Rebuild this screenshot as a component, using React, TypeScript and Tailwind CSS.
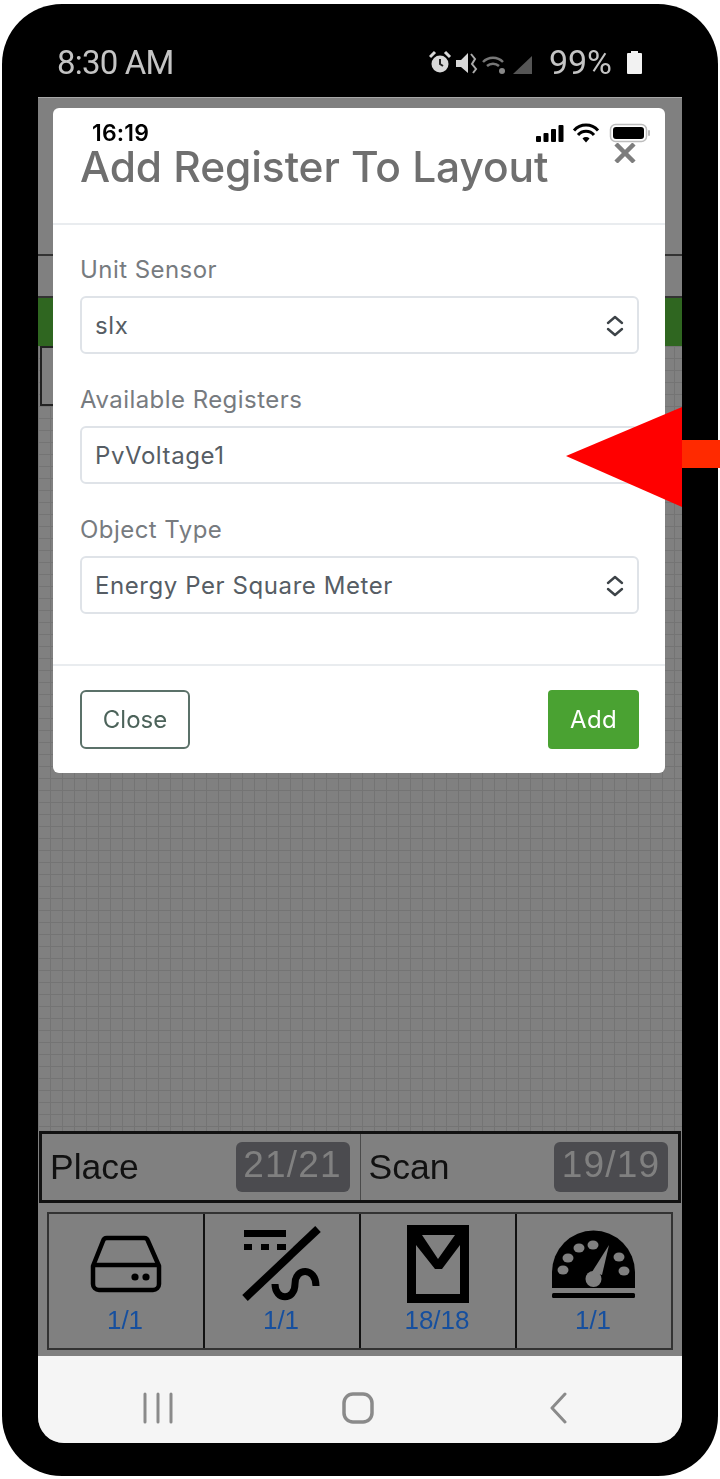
const sans = { fontFamily: "Inter, sans-serif" };

function Field({ label, value, chevrons }: { label: string; value: string; chevrons?: boolean }) {
  return (
    <div className="mb-[28px]">
      <div className="h-[36px] mb-[8px] flex items-center text-[24px] text-[#777b7f] tracking-[0.45px]">{label}</div>
      <div className="h-[58px] rounded-[6px] border-2 border-[#dfe3e8] pl-[13px] pr-[12px] pt-[2px] flex items-center justify-between text-[24px] text-[#565d64] tracking-[0.58px]">
        <span>{value}</span>
        {chevrons && (
          <svg width="20" height="26" viewBox="0 0 20 26" fill="none" stroke="#3d4348" strokeWidth="2.4" strokeLinecap="round" strokeLinejoin="round">
            <path d="M3 10l7-6 7 6M3 16l7 6 7-6" />
          </svg>
        )}
      </div>
    </div>
  );
}

function AndroidStatus() {
  return (
    <div className="h-[93px] shrink-0 flex items-center justify-between pl-[19px] pr-[40px] pt-[24px] blur-[0.5px]" style={{ fontFamily: "Roboto, sans-serif" }}>
      <span className="text-[33px] text-[#c4c4c4] tracking-[-0.8px]">8:30 AM</span>
      <div className="flex items-center">
        <svg width="106" height="26" viewBox="0 0 106 26" className="mr-[14px]">
          <circle cx="11" cy="14" r="8.5" fill="#d8d8d8" />
          <path d="M11 9v5l3 2" stroke="#222" strokeWidth="2" fill="none" />
          <path d="M1 7l5-5M21 7l-5-5" stroke="#d8d8d8" strokeWidth="3" />
          <path d="M27 10h5l7-7v20l-7-6h-5z" fill="#d8d8d8" />
          <path d="M42 4l4 5-3 5 4 5-3 4" stroke="#aaa" strokeWidth="2" fill="none" />
          <path d="M54 12a14 14 0 0 1 20 0M58 16a9 9 0 0 1 12 0" stroke="#777" strokeWidth="2.5" fill="none" />
          <circle cx="73" cy="21" r="3" fill="#888" />
          <path d="M84 24L103 6v18z" fill="#555" />
        </svg>
        <span className="text-[34px] text-[#c4c4c4] mr-[15px]">99%</span>
        <svg width="15" height="23" viewBox="0 0 15 23">
          <path d="M4 0h7v2h3a1 1 0 0 1 1 1v19a1 1 0 0 1-1 1H1a1 1 0 0 1-1-1V3a1 1 0 0 1 1-1h3z" fill="#f2f2f2" />
        </svg>
      </div>
    </div>
  );
}

function IosStatus() {
  return (
    <div className="h-[24px] flex items-center justify-between pl-[39px] pr-[14px] text-black">
      <span className="text-[23px] font-semibold tracking-[0.2px] leading-none" style={sans}>16:19</span>
      <svg width="115" height="20" viewBox="0 0 115 20">
        <rect x="0" y="13" width="5" height="6" rx="1" />
        <rect x="7.5" y="10" width="5" height="9" rx="1" />
        <rect x="15" y="6" width="5" height="13" rx="1" />
        <rect x="22.5" y="2" width="5" height="17" rx="1" />
        <path d="M38 7.5a16 16 0 0 1 24 0M42 12a10.5 10.5 0 0 1 16 0" fill="none" stroke="#000" strokeWidth="3" />
        <path d="M46.5 15.5a5 5 0 0 1 7 0L50 19.5z" />
        <rect x="74.5" y="1.5" width="36" height="17" rx="5" fill="none" stroke="#bdbdbd" strokeWidth="1.5" />
        <rect x="77" y="4" width="31" height="12" rx="3" />
        <rect x="112" y="7" width="2" height="6" rx="1" fill="#bdbdbd" />
      </svg>
    </div>
  );
}

function DriveIcon() {
  return (
    <svg width="72" height="58" viewBox="0 0 72 58" fill="none" stroke="#000" strokeWidth="4.5" strokeLinejoin="round">
      <path d="M17 3h37a4 4 0 0 1 4 3l11 25v18a6 6 0 0 1-6 6H9a6 6 0 0 1-6-6V31L13 6a4 4 0 0 1 4-3z" />
      <path d="M3 30h66" />
      <circle cx="45" cy="42" r="3.6" fill="#000" stroke="none" />
      <circle cx="56" cy="42" r="3.6" fill="#000" stroke="none" />
    </svg>
  );
}

function SlashIcon() {
  return (
    <svg width="80" height="76" viewBox="243 1225 80 76">
      <path d="M245 1229h42v7h-42zM245 1243h8v6h-8zM262 1243h8v6h-8zM278 1243h9v6h-9z" />
      <path d="M319 1228L246 1297" stroke="#000" strokeWidth="8" />
      <path d="M276 1283C276 1300 296 1300 296 1283C296 1266 317 1266 317 1285" stroke="#000" strokeWidth="7" fill="none" />
    </svg>
  );
}

function ValveIcon() {
  return (
    <svg width="62" height="78" viewBox="407 1223 62 78">
      <path fillRule="evenodd" d="M407 1223h62v78h-62zM422 1233L438 1257L455 1233zM416 1243V1292H460V1243L442 1267H435z" />
    </svg>
  );
}

function GaugeIcon() {
  return (
    <svg width="84" height="70" viewBox="553 1227 84 70">
      <path d="M553 1286V1270A41.5 41.5 0 0 1 636 1270V1286z" />
      <rect x="553" y="1291" width="83" height="5" rx="1.5" />
      <g fill="#808080">
        <ellipse cx="564" cy="1268" rx="5.5" ry="4.5" />
        <ellipse cx="569" cy="1256" rx="5.5" ry="4.5" />
        <ellipse cx="580" cy="1246" rx="5.5" ry="4.5" />
        <ellipse cx="594" cy="1243" rx="5.5" ry="4.5" />
        <ellipse cx="620" cy="1255" rx="5.5" ry="4.5" />
        <ellipse cx="625" cy="1269" rx="5.5" ry="4.5" />
        <path d="M610 1243L603 1273L593 1270z" />
        <circle cx="594.5" cy="1277" r="8" />
      </g>
    </svg>
  );
}

function Tile({ icon, count, border }: { icon: React.ReactNode; count: string; border?: boolean }) {
  return (
    <div className={`flex-1 flex flex-col items-center pt-[4px] ${border ? "border-r-2 border-[#111]" : ""}`}>
      <div className="h-[92px] flex items-center justify-center">{icon}</div>
      <span className="text-[26px] leading-none text-[#164f9e] -ml-[2px] -mt-[3px]" style={{ fontFamily: "Liberation Sans, sans-serif" }}>{count}</span>
    </div>
  );
}

function Count({ label, value, right }: { label: string; value: string; right?: boolean }) {
  return (
    <div className={`flex-1 flex items-center justify-between pl-[8px] pr-[10px] ${right ? "" : "border-r border-[#4a4a4a]"}`}>
      <span className="text-[35.5px] text-[#111] mt-[2px]">{label}</span>
      <span className="w-[114px] h-[50px] rounded-[6px] bg-[#4b4b4f] text-[#808080] text-[37px] flex items-center justify-center tracking-[1.2px] pb-[5px]">{value}</span>
    </div>
  );
}

export default function App() {
  return (
    <div className="relative w-[720px] h-[1479px] bg-white pt-[4px] pb-[3px] px-[2px]">
      <div className="h-full bg-black rounded-[60px] flex flex-col px-[36px] pb-[33px]">
        <AndroidStatus />

        <div className="relative flex-1 flex flex-col rounded-b-[26px] overflow-hidden bg-[#808080] border-t border-[#a8a8a8] blur-[0.35px]" style={{ fontFamily: "Liberation Sans, sans-serif" }}>
          {/* page behind the dialog */}
          <div className="h-[158px] shrink-0 border-b-2 border-[#333]" />
          <div className="h-[42px] shrink-0 border-b-2 border-[#333]" />
          <div className="h-[48px] shrink-0 bg-[#2f6620]" />
          <div className="flex-1 bg-[#808080] bg-[linear-gradient(#747474_1px,transparent_1px),linear-gradient(90deg,#747474_1px,transparent_1px)] bg-[size:12px_12px]">
            <div className="h-[60px] w-[40px] ml-[2px] border-2 border-[#222] bg-[#808080]" />
          </div>

          <div className="h-[72px] shrink-0 mx-[1px] flex border-[3px] border-[#111]">
            <Count label="Place" value="21/21" />
            <Count label="Scan" value="19/19" right />
          </div>

          <div className="h-[9px] shrink-0" />
          <div className="h-[138px] shrink-0 mx-[9px] flex border-2 border-[#333] text-center">
            <Tile icon={<DriveIcon />} count="1/1" border />
            <Tile icon={<SlashIcon />} count="1/1" border />
            <Tile icon={<ValveIcon />} count="18/18" border />
            <Tile icon={<GaugeIcon />} count="1/1" />
          </div>
          <div className="h-[6px] shrink-0" />

          <div className="h-[87px] shrink-0 bg-[#f5f5f5] flex items-center justify-between pl-[105px] pr-[115px] pt-[16px]">
            <svg width="30" height="32" viewBox="0 0 30 32" stroke="#8a8a8a" strokeWidth="3" strokeLinecap="round">
              <path d="M2 2v28M15 2v28M28 2v28" />
            </svg>
            <svg className="mr-[6px]" width="32" height="32" viewBox="0 0 32 32" fill="none" stroke="#8a8a8a" strokeWidth="3.5">
              <rect x="2" y="2" width="28" height="28" rx="9" />
            </svg>
            <svg width="18" height="32" viewBox="0 0 18 32" fill="none" stroke="#8a8a8a" strokeWidth="3" strokeLinecap="round" strokeLinejoin="round">
              <path d="M16 2L3 16l13 14" />
            </svg>
          </div>

          {/* dialog */}
          <div className="absolute left-[15px] top-[10px] w-[612px] h-[665px] bg-white rounded-[6px] flex flex-col" style={sans}>
            <div className="relative h-[117px] shrink-0 pt-[13px] border-b-2 border-[#e9ecef]">
              <IosStatus />
              <h2 className="text-[42.5px] font-medium text-[#6f6f6f] leading-none ml-[27px] mt-[1px] tracking-[-0.1px]">Add Register To Layout</h2>
              <svg className="absolute right-[28px] top-[35px]" width="24" height="20" viewBox="0 0 24 20" stroke="#7d7d7d" strokeWidth="4.5">
                <path d="M3 1l18 18M21 1L3 19" />
              </svg>
            </div>
            <div className="flex-1 pt-[27px] pl-[27px] pr-[26px]">
              <Field label="Unit Sensor" value="slx" chevrons />
              <Field label="Available Registers" value="PvVoltage1" />
              <Field label="Object Type" value="Energy Per Square Meter" chevrons />
            </div>
            <div className="h-[109px] shrink-0 border-t-2 border-[#e9ecef] pl-[27px] pr-[26px] pt-[24px] flex justify-between items-start">
              <button className="w-[110px] h-[59px] rounded-[6px] border-2 border-[#5b7169] text-[24px] text-[#4c635a]">Close</button>
              <button className="w-[91px] h-[59px] rounded-[4px] bg-[#4aa232] text-[24px] text-white tracking-[0.3px]">Add</button>
            </div>
          </div>
        </div>
      </div>

      {/* callout arrow */}
      <svg className="absolute left-[566px] top-[407px]" width="154" height="100" viewBox="0 0 154 100">
        <path d="M116 33h38v28h-38z" fill="#ff2a00" />
        <path d="M0 49L116 0v100z" fill="#ff0000" />
      </svg>
    </div>
  );
}
